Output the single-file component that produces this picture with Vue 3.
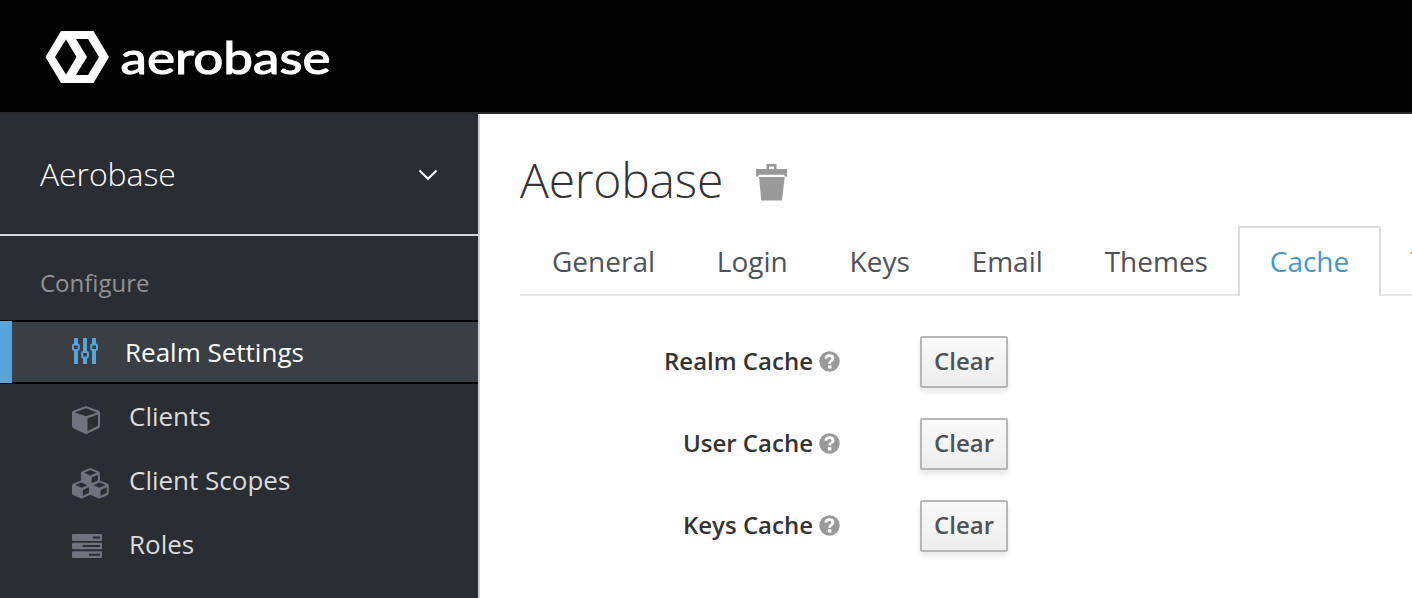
<script setup>
const tabs = ['General', 'Login', 'Keys', 'Email', 'Themes', 'Cache', 'Tokens']
const active = 'Cache'
const rows = ['Realm Cache', 'User Cache', 'Keys Cache']
</script>

<template>
  <div class="page">
    <header class="topbar">
      <svg class="logo" width="300" height="60" viewBox="0 0 300 60">
        <path fill="#fff" fill-rule="evenodd" d="M16 1H48.500L64 27L48.500 53H16L0.500 27ZM21 9.500L10 27L21 44.500L31.500 27ZM31 9L42 27L31 45H43L54 27L43 9Z" />
        <text x="75.500" y="43.500" textLength="210" lengthAdjust="spacingAndGlyphs">aerobase</text>
      </svg>
    </header>
    <div class="body">
      <nav class="sidebar">
        <div class="realm">
          <span>Aerobase</span>
          <svg width="20" height="12" viewBox="0 0 20 12"><path d="M1.500 1.500L10 9.700L18.500 1.500" fill="none" stroke="#fff" stroke-width="2.200" /></svg>
        </div>
        <div class="section">Configure</div>
        <a class="item current">
          <span class="icon">
            <svg width="28" height="28" viewBox="0 0 28 28">
              <g fill="#57a4da"><path d="M2 1h4v26h-4zM11 1h4v26h-4zM20 1h4v26h-4z" /></g>
              <g fill="#3a3f43" stroke="#57a4da" stroke-width="2"><rect x="1" y="7.500" width="5.800" height="5.500" rx="1.200" /><rect x="10.100" y="15" width="5.800" height="5.500" rx="1.200" /><rect x="19.200" y="7.500" width="5.800" height="5.500" rx="1.200" /></g>
            </svg>
          </span>
          <span>Realm Settings</span>
        </a>
        <a class="item">
          <span class="icon cube">
            <svg width="28" height="28" viewBox="0 0 28 28"><path fill="#6f7380" fill-rule="evenodd" d="M14 0L27 4.800Q28 5.300 28 6.500V20Q28 21.500 26.800 22.200L15 27.700Q14 28.200 13 27.700L1.200 22.200Q0 21.500 0 20V6.500Q0 5.300 1 4.800ZM14 2.300L3 6.400L14 10.300L25 6.400ZM15.500 12.200V25L26 19.800V8.500Z" /></svg>
          </span>
          <span>Clients</span>
        </a>
        <a class="item">
          <span class="icon cubes">
            <svg width="37" height="31" viewBox="0 0 37 31">
              <defs><path id="box" fill-rule="evenodd" d="M9.500 0L17.500 3.300Q19 4 19 5.300V13Q19 14.200 18 14.700L10.500 18Q9.500 18.500 8.500 18L1 14.700Q0 14.200 0 13V5.300Q0 4 1.500 3.300ZM9.500 2L3.200 4.700L9.500 7.400L15.800 4.700ZM10.800 9.600V15.400L17 12.500V7Z" /></defs>
              <g fill="#6f7380"><use href="#box" x="8.900" y="0" /><use href="#box" x="0" y="12.300" /><use href="#box" x="17.800" y="12.300" /></g>
            </svg>
          </span>
          <span>Client Scopes</span>
        </a>
        <a class="item">
          <span class="icon roles">
            <svg width="30" height="24" viewBox="0 0 30 24"><g fill="#6f7380"><rect width="30" height="7" rx="1" /><rect y="8.700" width="30" height="6.600" rx="1" /><rect y="17.300" width="30" height="6.700" rx="1" /></g><path fill="#2a2d32" d="M21 2.500h7v2h-7zM10.500 11h17.500v2h-17.500zM17 19.700h11v2h-11z" /></svg>
          </span>
          <span>Roles</span>
        </a>
        <a class="item"><span class="icon"></span><span>Identity Providers</span></a>
      </nav>
      <main class="main">
        <h1>
          <span>Aerobase</span>
          <svg width="31" height="37" viewBox="0 0 31 37"><path fill="#999" fill-rule="evenodd" d="M10.500 0H20.500V5H31V12.500H28.500V10.800H2.500V12.500H0V5H10.500ZM13 2.500V5H18V2.500ZM3 13H28.700L26 36.500H5.300Z" /></svg>
        </h1>
        <ul class="tabs">
          <li v-for="t in tabs" :key="t" :class="{ on: t === active }">{{ t }}</li>
        </ul>
        <div v-for="r in rows" :key="r" class="row">
          <label>{{ r }}</label>
          <svg width="21" height="21" viewBox="0 0 21 21"><circle cx="10.500" cy="10.500" r="10.200" fill="#999" /><path d="M6.700 7.700C7.200 5.400 8.700 4.600 10.500 4.600C12.700 4.600 14 5.800 14 7.500C14 10 10.600 9.800 10.600 12.700" fill="none" stroke="#fff" stroke-width="2.800" /><path fill="#fff" d="M8.900 14.200h3.500v3.300h-3.500z" /></svg>
          <button>Clear</button>
        </div>
      </main>
    </div>
  </div>
</template>

<style>
body { background: #fff; overflow: hidden; }
</style>
<style scoped>
.page { width: 1412px; height: 598px; overflow: hidden; display: flex; flex-direction: column; font-family: "Open Sans", sans-serif; box-sizing: border-box; }
.topbar { height: 114px; flex: none; box-sizing: border-box; background: #010101; border-bottom: 2px solid #292929; padding: 30px 0 0 45px; }
.logo { display: block; }
.logo text { font-family: Lato, sans-serif; font-weight: 400; font-size: 45px; fill: #fff; stroke: #fff; stroke-width: 1.1px; }
.body { display: flex; height: 484px; }
.sidebar { width: 480px; flex: none; box-sizing: border-box; background: #2a2d32; border-right: 2px solid #d1d1d1; overflow: hidden; color: #dbdbdb; }
.realm { height: 122px; box-sizing: border-box; border-bottom: 2px solid #d7d5d8; display: flex; align-items: center; justify-content: space-between; padding: 0 40px 2px; color: #fff; font-size: 32px; font-weight: 300; letter-spacing: -.1px; }
.realm svg { margin-top: 4px; }
.section { height: 84px; box-sizing: border-box; padding: 30px 40px 0; font-size: 24px; line-height: 33px; color: #929292; }
.item { display: flex; height: 64px; align-items: center; padding-left: 72px; font-size: 26px; box-sizing: border-box; }
.item.current { background: #3a3f43; border: solid #000; border-width: 2px 0; color: #fff; padding-left: 60px; }
.item.current::before { content: ""; width: 12px; height: 62px; margin-left: -60px; margin-right: 60px; background: #57a4da; }
.icon { width: 57px; flex: none; display: flex; }
.current .icon { width: 53px; padding-bottom: 2px; }
.cube { padding-top: 8px; }
.cubes { padding-top: 6px; }
.roles { padding-top: 4px; }
.main { flex: 1; min-width: 0; overflow: hidden; padding-left: 40px; }
h1 { margin: 0; height: 112px; display: flex; align-items: center; gap: 33px; font-size: 48px; font-weight: 300; color: #333; padding-top: 19px; box-sizing: border-box; letter-spacing: -.2px; }
h1 span { line-height: 65px; }
h1 svg { margin-top: 5px; }
.tabs { list-style: none; margin: 0 0 40px; padding: 0; display: flex; height: 70px; width: 1100px; box-shadow: inset 0 -2px #e7e7e7; }
.tabs li { box-sizing: border-box; height: 70px; padding: 0 30px; border: 2px solid transparent; border-bottom: 0; margin-right: -2.200px; font-size: 28px; line-height: 66px; color: #4d5258; flex: none; }
.tabs li.on { color: #4497ce; border-color: #dbdbdb; background: #fff; border-radius: 2px 2px 0 0; }
.row { display: flex; align-items: center; height: 52px; margin-bottom: 30px; }
.row label { width: 293px; text-align: right; font-size: 24px; font-weight: 600; color: #333; padding-bottom: 3px; }
.row svg { margin: 0 80px 2px 6px; }
button { width: 88px; height: 52px; box-sizing: border-box; padding: 0 0 4px; border: 2px solid #b7b7b7; border-radius: 2px; background: linear-gradient(#fafafa, #ededed); box-shadow: 0 4px 6px rgba(3, 3, 3, .1); font: 600 24px "Open Sans", sans-serif; color: #4d5258; }
</style>
